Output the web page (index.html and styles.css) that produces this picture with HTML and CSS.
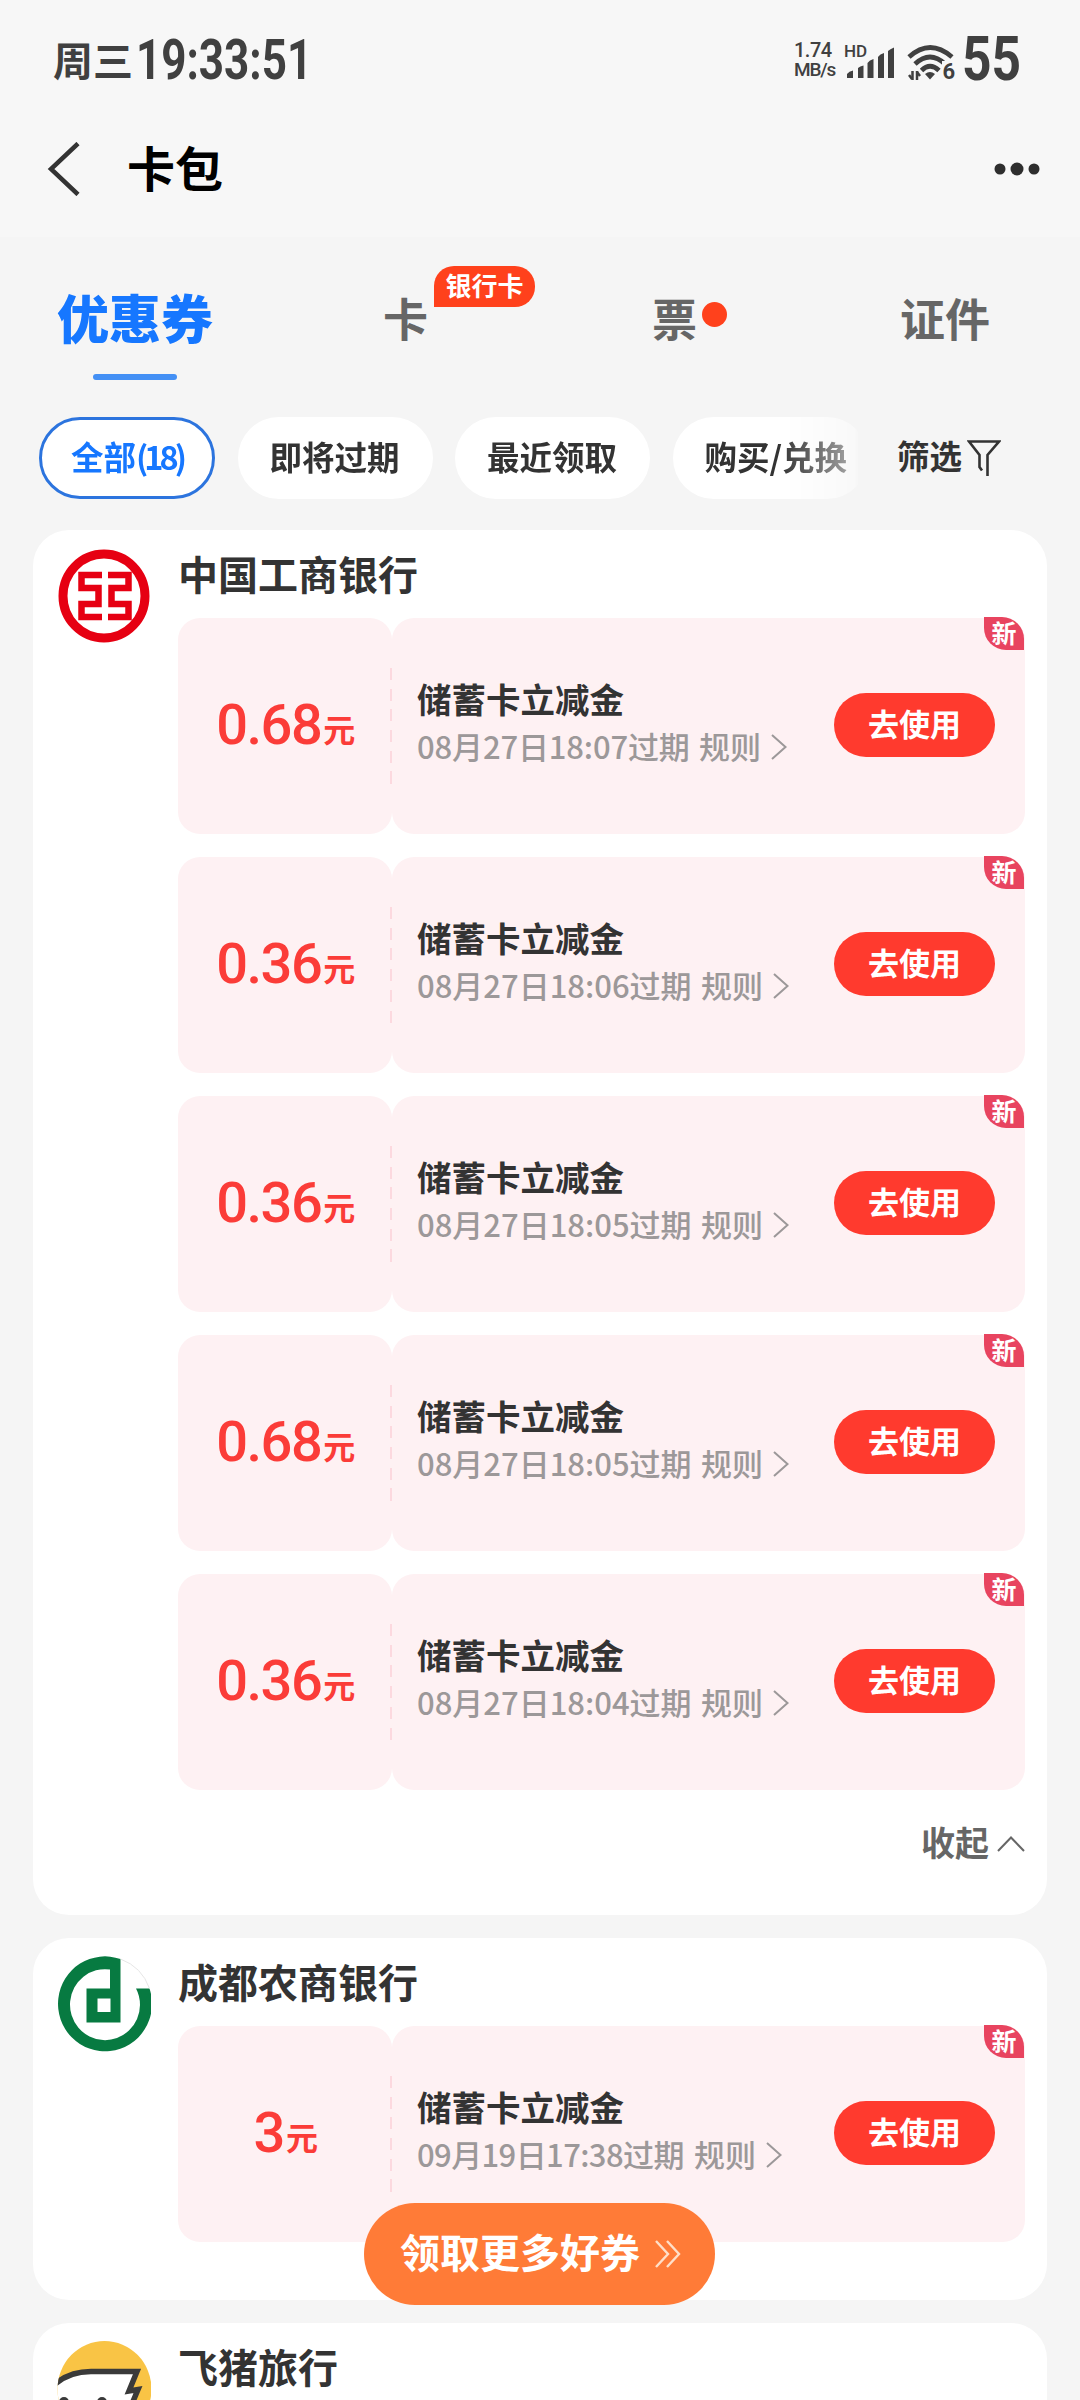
FILE: index.html
```html
<!DOCTYPE html>
<html lang="zh-CN">
<head>
  <meta charset="UTF-8" />
  <title>卡包</title>
  <link rel="stylesheet" href="styles.css">
</head>
<body>
  <svg class="defs" width="0" height="0">
    <symbol id="arrow" viewBox="0 0 16 26"><path d="M1 1 L14.5 13 L1 25" fill="none" stroke="currentColor" stroke-width="2"/></symbol>
  </svg>

  <header class="header">
    <div class="status">
      <div class="clock"><span class="week">周三</span><span class="time">19:33:51</span></div>
      <div class="status-right">
        <div class="speed"><span>1.74</span><span class="unit">MB/s</span></div>
        <div class="signal">
          <span class="hd">HD</span>
          <svg width="50" height="34" viewBox="0 0 50 34" fill="#404040">
            <path d="M2 33V29Q4 26 8 25.500V33ZM13 33V23Q15 21 18.500 20.500V33ZM22.500 33V18Q24.500 15 28.500 14V33ZM33 33V12Q35 9 39 8V33ZM43 33V6Q45 4 49 2.500V33Z"/>
          </svg>
        </div>
        <div class="wifi">
          <svg width="48" height="38" viewBox="0 0 48 38" fill="none" stroke="#404040" stroke-width="4.800">
            <path d="M2 14Q23-5 45 14M8 21Q23 7 38 21M14.500 27.500Q23 19 32 27.500"/>
            <path d="M18 31Q23 27 28 31L23 36.500Z" fill="#404040" stroke="none"/>
            <path d="M5.500 28V37M10 28V37" stroke-width="2.500"/>
            <path d="M2 32L5 36M10 29L13 33" stroke-width="2.500"/>
          </svg>
          <span class="wifi-num">6</span>
        </div>
        <span class="battery">55</span>
      </div>
    </div>
    <div class="navbar">
      <svg class="back" width="34" height="54" viewBox="0 0 34 54"><path d="M31 1.500L4 27L31 52.500" fill="none" stroke="#333" stroke-width="4.500"/></svg>
      <h1 class="title">卡包</h1>
      <svg class="more" width="46" height="16" viewBox="0 0 46 16" fill="#2e2e2e">
        <circle cx="6" cy="8" r="5.500"/><circle cx="23" cy="8" r="6.500"/><circle cx="40" cy="8" r="5.500"/>
      </svg>
    </div>
  </header>

  <nav class="tabs">
    <div class="tab active">优惠券</div>
    <div class="tab tab-card">卡<span class="tab-badge">银行卡</span></div>
    <div class="tab tab-ticket">票<span class="tab-dot"></span></div>
    <div class="tab tab-id">证件</div>
  </nav>

  <div class="filters">
    <div class="chips">
      <div class="chip on">全部<span class="count">(18)</span></div>
      <div class="chip">即将过期</div>
      <div class="chip">最近领取</div>
      <div class="chip">购买/兑换</div>
    </div>
    <div class="filter"><span>筛选</span>
      <svg width="34" height="40" viewBox="0 0 34 40" fill="none" stroke="#333" stroke-width="2.600"><path d="M15 32.500L12.500 29V17L2 3.500H32L20.500 17V38"/></svg>
    </div>
  </div>

  <main class="list">
    <section class="card">
      <svg class="logo" width="94" height="96" viewBox="0 0 94 96">
        <ellipse cx="47" cy="48" rx="41" ry="42" fill="#fff" stroke="#e60012" stroke-width="9"/>
        <g fill="none" stroke="#e60012" stroke-width="6.500">
          <path d="M45 27H24.500V40H41.500V56H24.500V69H45"/>
          <path d="M51 27H71.500V40H54.500V56H71.500V69H51"/>
        </g>
      </svg>
      <div class="content">
        <h2 class="name">中国工商银行</h2>
        <div class="coupon">
          <div class="amount">0.68<small>元</small></div>
          <div class="detail">
            <div class="info">
              <div class="info-name">储蓄卡立减金</div>
              <div class="info-date"><span class="date">08月27日18:07过期</span><span>规则</span><svg width="16" height="26"><use href="#arrow"/></svg></div>
            </div>
            <div class="use">去使用</div>
            <span class="new">新</span>
          </div>
        </div>
        <div class="coupon">
          <div class="amount">0.36<small>元</small></div>
          <div class="detail">
            <div class="info">
              <div class="info-name">储蓄卡立减金</div>
              <div class="info-date"><span class="date wide">08月27日18:06过期</span><span>规则</span><svg width="16" height="26"><use href="#arrow"/></svg></div>
            </div>
            <div class="use">去使用</div>
            <span class="new">新</span>
          </div>
        </div>
        <div class="coupon">
          <div class="amount">0.36<small>元</small></div>
          <div class="detail">
            <div class="info">
              <div class="info-name">储蓄卡立减金</div>
              <div class="info-date"><span class="date wide">08月27日18:05过期</span><span>规则</span><svg width="16" height="26"><use href="#arrow"/></svg></div>
            </div>
            <div class="use">去使用</div>
            <span class="new">新</span>
          </div>
        </div>
        <div class="coupon">
          <div class="amount">0.68<small>元</small></div>
          <div class="detail">
            <div class="info">
              <div class="info-name">储蓄卡立减金</div>
              <div class="info-date"><span class="date wide">08月27日18:05过期</span><span>规则</span><svg width="16" height="26"><use href="#arrow"/></svg></div>
            </div>
            <div class="use">去使用</div>
            <span class="new">新</span>
          </div>
        </div>
        <div class="coupon">
          <div class="amount">0.36<small>元</small></div>
          <div class="detail">
            <div class="info">
              <div class="info-name">储蓄卡立减金</div>
              <div class="info-date"><span class="date wide">08月27日18:04过期</span><span>规则</span><svg width="16" height="26"><use href="#arrow"/></svg></div>
            </div>
            <div class="use">去使用</div>
            <span class="new">新</span>
          </div>
        </div>
        <div class="fold"><span>收起</span><svg width="28" height="16" viewBox="0 0 28 16" fill="none" stroke="#666" stroke-width="2"><path d="M1 15L14 1.500L27 15"/></svg></div>
      </div>
    </section>

    <section class="card">
      <svg class="logo" width="94" height="96" viewBox="0 0 94 96">
        <path d="M63.500 3A47 47.500 0 1 0 92.500 32.500H79Q83 40 83 49A35 35.500 0 1 1 53 13.500V32.500H29.500V66.500H63.500Z" fill="#077a41"/>
        <path d="M40.500 42.500H53.500V56H40.500Z" fill="#fff"/>
        <path d="M63.500 3Q85 11 92.500 32.500" fill="none" stroke="#e6e6e6" stroke-width="1"/>
      </svg>
      <div class="content">
        <h2 class="name">成都农商银行</h2>
        <div class="coupon">
          <div class="amount">3<small>元</small></div>
          <div class="detail">
            <div class="info">
              <div class="info-name">储蓄卡立减金</div>
              <div class="info-date"><span class="date narrow">09月19日17:38过期</span><span>规则</span><svg width="16" height="26"><use href="#arrow"/></svg></div>
            </div>
            <div class="use">去使用</div>
            <span class="new">新</span>
          </div>
        </div>
      </div>
    </section>

    <section class="card">
      <svg class="logo" width="94" height="96" viewBox="0 0 94 96">
        <defs><clipPath id="round"><ellipse cx="47.500" cy="48" rx="47" ry="48"/></clipPath></defs>
        <g clip-path="url(#round)">
          <rect width="94" height="96" fill="#f9c445"/>
          <path d="M-3 44Q12 30.500 34 30.500H80L72 50L81 48.500L72 70L60 100H-3Z" fill="#fff" stroke="#3a3a3a" stroke-width="5.500"/>
          <circle cx="7" cy="61" r="5" fill="#3a3a3a"/>
          <circle cx="45" cy="61" r="5" fill="#3a3a3a"/>
        </g>
      </svg>
      <div class="content">
        <h2 class="name">飞猪旅行</h2>
      </div>
    </section>
  </main>

  <div class="more-btn"><span>领取更多好券</span>
    <svg width="28" height="30" viewBox="0 0 28 30" fill="none" stroke="#ffdfc8" stroke-width="2.400"><path d="M2 2L14 15L2 28M13 2L25 15L13 28"/></svg>
  </div>
</body>
</html>
```
FILE: styles.css
```css
* {
  box-sizing: border-box;
}
body {
  margin: 0;
  width: 1080px;
  height: 2400px;
  overflow: hidden;
  position: relative;
  background: #f5f5f5;
  color: #333;
  font-family: "Noto Sans CJK SC", sans-serif;
  line-height: 1;
}
h1, h2 {
  margin: 0;
}
svg {
  display: block;
  flex: none;
}
.defs {
  position: absolute;
}

/* status bar and title */
.header {
  height: 237px;
  background: #f7f7f7;
}
.status {
  display: flex;
  justify-content: space-between;
  height: 118px;
  padding: 0 59px 0 53px;
  color: #404040;
}
.clock {
  display: flex;
  padding-top: 32px;
}
.week {
  width: 83px;
  padding-top: 7px;
  font-size: 40px;
  font-weight: 700;
}
.time {
  font-family: Roboto, sans-serif;
  font-size: 56px;
  font-weight: 700;
  width: 172px;
  white-space: nowrap;
  transform: scaleX(0.785);
  transform-origin: 0 0;
}
.status-right {
  display: flex;
  font-family: Roboto, sans-serif;
}
.speed {
  width: 50px;
  padding-top: 41px;
  font-size: 20px;
  font-weight: 500;
  line-height: 19px;
}
.speed span {
  display: block;
  width: 40px;
  letter-spacing: -0.500px;
}
.speed .unit {
  font-size: 19px;
  line-height: 20px;
  letter-spacing: -1.200px;
}
.signal {
  position: relative;
  width: 63px;
  padding: 45px 0 0 1px;
}
.hd {
  position: absolute;
  left: 0;
  top: 43px;
  font-size: 17px;
  font-weight: 500;
}
.wifi {
  position: relative;
  width: 55px;
  padding-top: 43px;
}
.wifi-num {
  position: absolute;
  right: 7px;
  top: 61px;
  font-size: 22px;
  font-weight: 700;
  background: #f7f7f7;
}
.battery {
  width: 59px;
  padding-top: 28px;
  font-size: 62px;
  font-weight: 700;
  transform: scaleX(0.83);
  transform-origin: 0 0;
}
.navbar {
  display: flex;
  align-items: center;
  height: 102px;
  padding: 0 40px 0 47px;
}
.title {
  flex: 1;
  margin-left: 46px;
  padding-bottom: 7px;
  color: #000;
  font-size: 48px;
}

/* tabs */
.tabs {
  display: flex;
  align-items: center;
  height: 160px;
  padding-left: 57px;
  color: #666;
  font-size: 45px;
  font-weight: 700;
}
.tab {
  position: relative;
}
.tab-card {
  margin-left: 170px;
}
.tab-ticket {
  margin-left: 224px;
}
.tab-id {
  margin-left: 203px;
}
.tab.active {
  color: #1677ff;
  font-size: 52px;
  font-weight: 900;
}
.tab.active::after {
  content: "";
  position: absolute;
  left: 36px;
  top: 83px;
  width: 84px;
  height: 6px;
  border-radius: 3px;
  background: #4490f5;
}
.tab-badge {
  position: absolute;
  left: 51px;
  top: -29px;
  width: 101px;
  height: 41px;
  border-radius: 20px 20px 20px 0;
  background: #ff411c;
  color: #fff;
  font-size: 26px;
  font-weight: 700;
  line-height: 37px;
  text-align: center;
}
.tab-dot {
  position: absolute;
  left: 50px;
  top: 7px;
  width: 25px;
  height: 25px;
  border-radius: 50%;
  background: #ff411c;
}

/* filter chips */
.filters {
  display: flex;
  align-items: center;
  height: 122px;
  padding-left: 39px;
  font-size: 32.500px;
  font-weight: 700;
}
.chips {
  display: flex;
  gap: 22.500px;
  width: 819px;
  overflow: hidden;
  -webkit-mask: linear-gradient(to right, #000 740px, rgba(0, 0, 0, 0.4) 815px, transparent 822px);
  mask: linear-gradient(to right, #000 740px, rgba(0, 0, 0, 0.4) 815px, transparent 822px);
}
.chip {
  flex: none;
  width: 195px;
  height: 82px;
  padding-left: 32px;
  border-radius: 41px;
  background: #fff;
  line-height: 77px;
}
.chip.on {
  width: 176px;
  padding: 0 29px;
  border: 3px solid #2c74de;
  color: #1677ff;
  line-height: 71px;
  white-space: nowrap;
}
.count {
  letter-spacing: -4px;
}
.filter {
  display: flex;
  align-items: center;
  gap: 5px;
  margin-left: 39px;
}
.filter span {
  padding-bottom: 5px;
}

/* merchant cards */
.list {
  display: flex;
  flex-direction: column;
  gap: 23px;
  padding: 11px 33px 0;
}
.card {
  display: flex;
  flex: none;
  padding: 18px 22px 58px 24px;
  border-radius: 36px;
  background: #fff;
}
.content {
  flex: 1;
  margin-left: 27px;
}
.name {
  height: 70px;
  padding-top: 5px;
  font-size: 40px;
  font-weight: 700;
}
.coupon {
  display: flex;
  height: 216px;
  margin-bottom: 23px;
}
.coupon:last-child {
  margin-bottom: 0;
}
.amount {
  width: 214px;
  padding-top: 79px;
  border-radius: 22px;
  background: #fef1f3;
  color: #fb3c38;
  font-family: Roboto, sans-serif;
  font-size: 56px;
  font-weight: 500;
  text-align: center;
  letter-spacing: -1.500px;
}
.amount small {
  position: relative;
  top: -2px;
  margin-left: 2px;
  font-family: "Noto Sans CJK SC", sans-serif;
  font-size: 32px;
  font-weight: 700;
  line-height: 1;
}
.detail {
  position: relative;
  flex: 1;
  display: flex;
  justify-content: space-between;
  padding: 0 30px 0 25px;
  border-radius: 22px;
  background: #fef1f3;
}
.detail::before {
  content: "";
  position: absolute;
  left: -2px;
  top: 50px;
  width: 2px;
  height: 116px;
  background: repeating-linear-gradient(#fcd9df 0 12px, transparent 12px 20.700px);
}
.info {
  padding-top: 63px;
}
.info-name {
  font-size: 34.500px;
  font-weight: 700;
}
.info-date {
  display: flex;
  align-items: center;
  margin-top: 14px;
  color: #9c9899;
  font-size: 31px;
  font-weight: 500;
}
.info-date svg {
  margin: 3px 0 0 10px;
}
.date {
  width: 282px;
  white-space: nowrap;
  letter-spacing: -0.150px;
}
.date.wide {
  width: 284px;
  letter-spacing: 0;
}
.date.narrow {
  width: 277px;
  letter-spacing: -0.600px;
}
.use {
  width: 161px;
  height: 64px;
  margin-top: 75px;
  border-radius: 32px;
  background: #ff3a2e;
  color: #fff;
  font-size: 31px;
  font-weight: 700;
  line-height: 60px;
  text-align: center;
}
.new {
  position: absolute;
  right: 1px;
  top: -1px;
  width: 40px;
  height: 33px;
  border-radius: 0 22px 0 22px;
  background: #e8445f;
  color: #fff;
  font-size: 25px;
  font-weight: 700;
  line-height: 30px;
  text-align: center;
}
.fold {
  display: flex;
  align-items: center;
  justify-content: flex-end;
  gap: 8px;
  height: 62px;
  margin-bottom: -18px;
  color: #666;
  font-size: 34px;
  font-weight: 700;
}
.fold span {
  padding-bottom: 4px;
}

/* floating button */
.more-btn {
  position: absolute;
  left: 364px;
  top: 2203px;
  display: flex;
  align-items: center;
  gap: 14px;
  width: 351px;
  height: 102px;
  padding-left: 36px;
  border-radius: 51px;
  background: #ff7b37;
  color: #fff;
  font-size: 40px;
  font-weight: 700;
}
.more-btn span {
  padding-bottom: 7px;
}
```
